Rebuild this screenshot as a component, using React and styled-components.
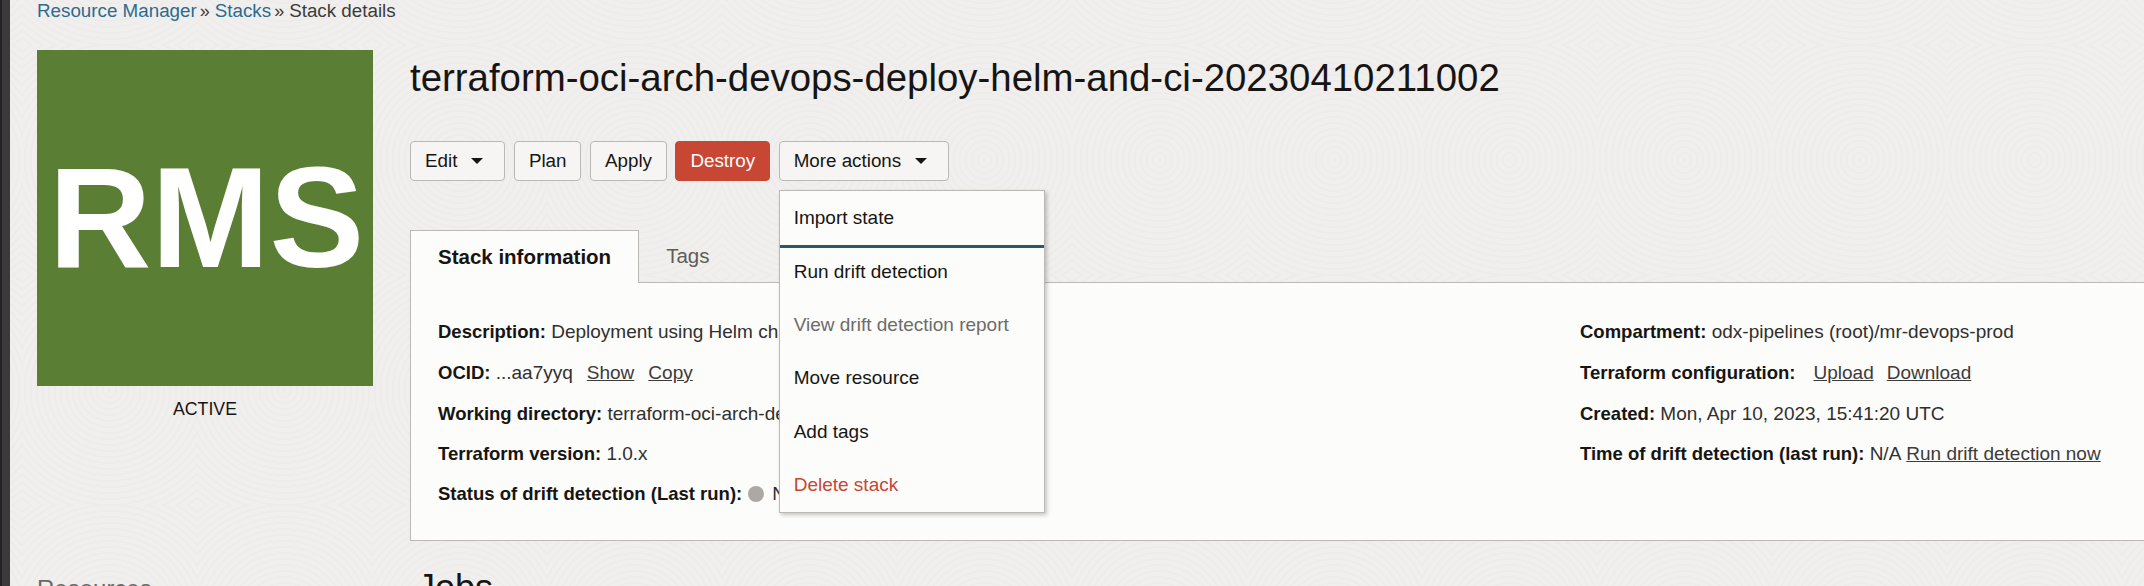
import React from 'react';
import styled, { createGlobalStyle } from 'styled-components';

const GlobalStyle = createGlobalStyle`
  html, body {
    margin: 0;
    padding: 0;
    height: 586px;
    overflow: hidden;
    background: #f1efed;
  }
  body {
    font-family: "Liberation Sans", Arial, sans-serif;
    font-size: 19px;
    color: #161513;
  }
`;

const Page = styled.div`
  display: flex;
  height: 586px;
  width: 2144px;
  overflow: hidden;
`;

const Rail = styled.div`
  flex: 0 0 10px;
  background: #3a3a3d;
  border-left: 2px solid #232325;
  box-sizing: border-box;
`;

const Main = styled.main`
  flex: 1;
  min-width: 0;
  padding-left: 27px;
  background-color: #f1efed;
  background-image: repeating-radial-gradient(
    circle at center,
    rgba(0, 0, 0, 0.012) 0 2px,
    transparent 2px 6px
  );
  background-size: 175px 230px;
  background-position: 12px 45px;
`;

const Breadcrumbs = styled.nav`
  display: flex;
  align-items: center;
  height: 22px;
  margin-bottom: 28px;
  font-size: 18.8px;
  color: #3d3b39;
`;

const Crumb = styled.a`
  color: #2c6b8f;
  text-decoration: none;
`;

const Sep = styled.span`
  margin: 0 5px 0 3px;
  font-size: 18px;
`;

const Columns = styled.div`
  display: flex;
  gap: 37px;
`;

const Side = styled.aside`
  flex: 0 0 336px;
`;

const Tile = styled.div`
  width: 336px;
  height: 336px;
  padding-left: 3px;
  box-sizing: border-box;
  display: flex;
  align-items: center;
  justify-content: center;
  background: #5b7e35;
  color: #fff;
  font-size: 142px;
  font-weight: 700;
`;

const State = styled.div`
  margin-top: 13px;
  text-align: center;
  line-height: 20px;
  font-size: 17.7px;
`;

const SideHeading = styled.h3`
  margin: 156px 0 0;
  font-size: 24px;
  font-weight: 400;
  color: #6b6966;
`;

const Content = styled.section`
  flex: 1;
  min-width: 0;
`;

const Title = styled.h1`
  margin: 0;
  height: 56px;
  line-height: 56px;
  font-size: 38.4px;
  font-weight: 400;
  white-space: nowrap;
`;

const Actions = styled.div`
  display: flex;
  gap: 8.5px;
  margin-top: 35px;
`;

const Button = styled.button`
  display: inline-flex;
  align-items: center;
  gap: 14px;
  height: 40px;
  padding: ${p => (p.$menu ? '0 21px 0 14px' : '0 14px')};
  border: 1px solid ${p => (p.$danger ? '#c74634' : '#bcb8b4')};
  border-radius: 4px;
  background: ${p => (p.$danger ? '#c74634' : '#f6f5f3')};
  color: ${p => (p.$danger ? '#fff' : '#161513')};
  font-family: inherit;
  font-size: 18.8px;
  white-space: nowrap;
`;

const Caret = styled.span`
  width: 0;
  height: 0;
  border-left: 6px solid transparent;
  border-right: 6px solid transparent;
  border-top: 6px solid #161513;
`;

const MenuAnchor = styled.div`
  position: relative;
`;

const Menu = styled.ul`
  position: absolute;
  z-index: 2;
  top: 49px;
  left: 0;
  width: 266px;
  margin: 0;
  padding: 0;
  list-style: none;
  box-sizing: border-box;
  background: #fcfcfb;
  border: 1px solid #bcb8b4;
  box-shadow: 2px 2px 4px rgba(0, 0, 0, 0.22);
`;

const MenuItem = styled.li`
  display: flex;
  align-items: center;
  height: 53.4px;
  padding-left: 14px;
  box-sizing: border-box;
  color: ${p => (p.$danger ? '#c74634' : p.$disabled ? '#6e6b68' : '#161513')};
`;

const FocusedItem = styled(MenuItem)`
  height: 57px;
  margin-bottom: -3px;
  border-bottom: 3px solid #2c5967;
`;

const Tabs = styled.div`
  display: flex;
  margin-top: 49px;
  height: 52px;
`;

const Tab = styled.div`
  display: flex;
  align-items: center;
  padding: 0 27px;
  font-size: 20.5px;
  box-sizing: border-box;
  color: #5f5c59;
  ${p =>
    p.$active &&
    `
    color: #161513;
    font-weight: 700;
    background: #fcfcfb;
    border: 1px solid #bcb8b4;
    border-bottom: none;
    position: relative;
    z-index: 1;
    height: 53px;
  `}
`;

const Panel = styled.div`
  display: grid;
  grid-template-columns: 1142px 1fr;
  padding: 29px 0 26px 27px;
  background: #fcfcfb;
  border: 1px solid #bcb8b4;
  border-right: none;
`;

const Row = styled.div`
  display: flex;
  align-items: center;
  height: ${p => (p.$tall ? '42px' : '40px')};
  white-space: pre;
  color: #312f2d;
`;

const Label = styled.b`
  font-size: 18.5px;
  color: #161513;
`;

const TextLink = styled.a`
  margin-left: ${p => p.$gap}px;
  color: #3d3b39;
  text-decoration: underline;
`;

const StatusDot = styled.span`
  width: 16px;
  height: 16px;
  margin: 0 8px 0 6px;
  border-radius: 50%;
  background: #aca8a3;
`;

const JobsHeading = styled.h2`
  margin: 25px 0 0 7px;
  font-size: 36px;
  line-height: 44px;
  font-weight: 400;
`;

export default function App() {
  return (
    <>
      <GlobalStyle />
      <Page>
        <Rail />
        <Main>
          <Breadcrumbs>
            <Crumb>Resource Manager</Crumb>
            <Sep>»</Sep>
            <Crumb>Stacks</Crumb>
            <Sep>»</Sep>
            <span>Stack details</span>
          </Breadcrumbs>
          <Columns>
            <Side>
              <Tile>RMS</Tile>
              <State>ACTIVE</State>
              <SideHeading>Resources</SideHeading>
            </Side>
            <Content>
              <Title>terraform-oci-arch-devops-deploy-helm-and-ci-20230410211002</Title>
              <Actions>
                <Button $menu>
                  Edit <Caret />
                </Button>
                <Button>Plan</Button>
                <Button>Apply</Button>
                <Button $danger>Destroy</Button>
                <MenuAnchor>
                  <Button $menu>
                    More actions <Caret />
                  </Button>
                  <Menu>
                    <FocusedItem>Import state</FocusedItem>
                    <MenuItem>Run drift detection</MenuItem>
                    <MenuItem $disabled>View drift detection report</MenuItem>
                    <MenuItem>Move resource</MenuItem>
                    <MenuItem>Add tags</MenuItem>
                    <MenuItem $danger>Delete stack</MenuItem>
                  </Menu>
                </MenuAnchor>
              </Actions>
              <Tabs>
                <Tab $active>Stack information</Tab>
                <Tab>Tags</Tab>
              </Tabs>
              <Panel>
                <div>
                  <Row>
                    <Label>Description:</Label> Deployment using Helm chart
                  </Row>
                  <Row $tall>
                    <Label>OCID:</Label> ...aa7yyq
                    <TextLink $gap={14}>Show</TextLink>
                    <TextLink $gap={14}>Copy</TextLink>
                  </Row>
                  <Row>
                    <Label>Working directory:</Label> terraform-oci-arch-devops-deploy
                  </Row>
                  <Row>
                    <Label>Terraform version:</Label> 1.0.x
                  </Row>
                  <Row>
                    <Label>Status of drift detection (Last run):</Label>
                    <StatusDot />
                    Not checked
                  </Row>
                </div>
                <div>
                  <Row>
                    <Label>Compartment:</Label> odx-pipelines (root)/mr-devops-prod
                  </Row>
                  <Row $tall>
                    <Label>Terraform configuration:</Label>
                    <TextLink $gap={18}>Upload</TextLink>
                    <TextLink $gap={13}>Download</TextLink>
                  </Row>
                  <Row>
                    <Label>Created:</Label> Mon, Apr 10, 2023, 15:41:20 UTC
                  </Row>
                  <Row>
                    <Label>Time of drift detection (last run):</Label> N/A
                    <TextLink $gap={5}>Run drift detection now</TextLink>
                  </Row>
                </div>
              </Panel>
              <JobsHeading>Jobs</JobsHeading>
            </Content>
          </Columns>
        </Main>
      </Page>
    </>
  );
}
